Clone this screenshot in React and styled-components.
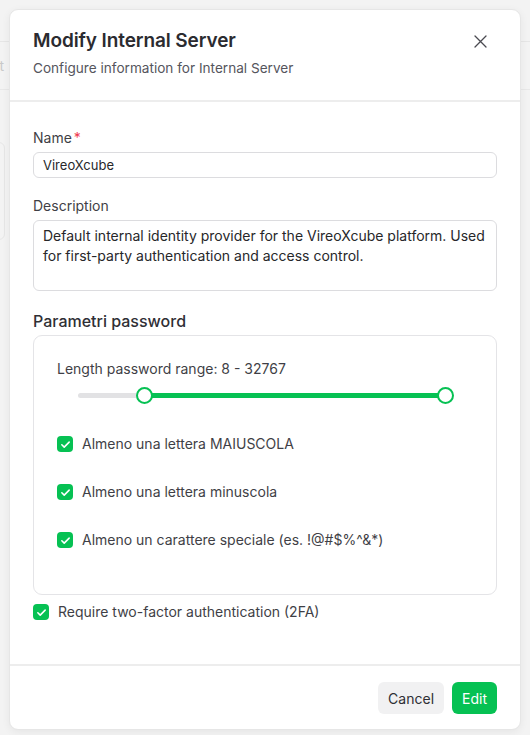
import React from "react";
import styled, { createGlobalStyle } from "styled-components";

const GlobalStyle = createGlobalStyle`
  * { box-sizing: border-box; }
  body {
    margin: 0;
    background: #f3f3f3;
    font-family: Inter, "Noto Sans", "Liberation Sans", sans-serif;
    color: #3f3f46;
    -webkit-font-smoothing: antialiased;
  }
`;

const Page = styled.div`
  position: relative;
  width: 530px;
  height: 735px;
  overflow: hidden;
  background: #f3f3f3;
`;

const GhostBar = styled.div`
  height: 42px;
  border-bottom: 1px solid #e6e6e6;
`;

const GhostRow = styled.div`
  height: 48px;
  border-bottom: 1px solid #e8e8e8;
  display: flex;
  align-items: center;
  font-size: 14px;
  color: #c9c9c9;
  & > span {
    margin-left: -4px;
  }
`;

const GhostCard = styled.div`
  margin: 52px 0 0 -10px;
  width: 15px;
  height: 98px;
  border: 1px solid #e6e6e6;
  border-radius: 6px;
`;

const Modal = styled.div`
  position: absolute;
  top: 9px;
  left: 9px;
  width: 512px;
  height: 721px;
  background: #fff;
  border-radius: 9px;
  border: 1px solid #e6e6e6;
  box-shadow: 0 2px 8px rgba(0, 0, 0, 0.06);
  display: flex;
  flex-direction: column;
`;

const Header = styled.div`
  position: relative;
  padding: 19px 23px 22px;
  border-bottom: 2px solid #ededed;
`;

const Title = styled.h2`
  margin: 0;
  font-size: 19px;
  line-height: 24px;
  font-weight: 600;
  color: #2b2b30;
  letter-spacing: -0.1px;
`;

const Subtitle = styled.p`
  margin: 5px 0 0;
  font-size: 13.6px;
  line-height: 20px;
  color: #55555d;
`;

const CloseButton = styled.button`
  position: absolute;
  top: 24px;
  right: 33px;
  width: 14px;
  height: 14px;
  padding: 0;
  border: 0;
  background: none;
  display: flex;
  align-items: center;
  justify-content: center;
  color: #4a4a50;
`;

const Body = styled.div`
  flex: 1;
  padding: 26px 23px 0;
  border-bottom: 2px solid #ededed;
`;

const Label = styled.div`
  font-size: 14px;
  line-height: 20px;
  color: #3f3f46;
  margin-top: ${(p) => p.$top || 0}px;
  margin-bottom: 4px;
  & > em {
    font-style: normal;
    color: #ef3b4f;
    margin-left: 2px;
  }
`;

const Input = styled.div`
  height: 26px;
  border: 1px solid #dcdcdf;
  border-radius: 6px;
  padding: 0 9px;
  display: flex;
  align-items: center;
  font-size: 13px;
  color: #27272a;
`;

const TextArea = styled.div`
  height: 71px;
  border: 1px solid #dcdcdf;
  border-radius: 6px;
  padding: 5px 9px;
  font-size: 14px;
  line-height: 20px;
  color: #27272a;
`;

const SectionTitle = styled.div`
  margin-top: 19px;
  font-size: 16px;
  line-height: 22px;
  font-weight: 500;
  color: #2f2f35;
`;

const PasswordBox = styled.div`
  margin-top: 3px;
  height: 260px;
  border: 1px solid #e4e4e7;
  border-radius: 9px;
  padding: 23px 23px 0;
`;

const RangeLabel = styled.div`
  font-size: 14px;
  line-height: 20px;
  color: #3f3f46;
`;

const SliderWrap = styled.div`
  position: relative;
  margin: 6px 27px 0 21px;
  height: 20px;
  display: flex;
  align-items: center;
`;

const Rail = styled.div`
  width: 100%;
  height: 5px;
  border-radius: 3px;
  background: #e2e2e4;
`;

const RangeFill = styled.div`
  position: absolute;
  top: 7.5px;
  height: 5px;
  border-radius: 3px;
  background: #06c153;
`;

const Thumb = styled.div`
  position: absolute;
  top: 1.5px;
  width: 17px;
  height: 17px;
  margin-left: -8.5px;
  border-radius: 50%;
  border: 2px solid #06c153;
  background: #fff;
`;

const CheckList = styled.div`
  margin-top: 29px;
  display: flex;
  flex-direction: column;
  gap: 28px;
`;

const CheckRow = styled.label`
  display: flex;
  align-items: center;
  gap: 9px;
  font-size: 14px;
  line-height: 20px;
  color: #3f3f46;
  margin-top: ${(p) => p.$top || 0}px;
`;

const Box = styled.span`
  width: 16px;
  height: 16px;
  flex: none;
  border-radius: 4px;
  background: #06c153;
  display: flex;
  align-items: center;
  justify-content: center;
`;

const Footer = styled.div`
  display: flex;
  justify-content: flex-end;
  gap: 8px;
  padding: 16px 23px 15px;
`;

const Button = styled.button`
  height: 32px;
  padding: 0 10px;
  border: 0;
  border-radius: 6px;
  font-family: inherit;
  font-size: 14px;
  background: ${(p) => (p.$primary ? "#06c153" : "#f1f1f2")};
  color: ${(p) => (p.$primary ? "#fff" : "#2f2f35")};
`;

const Check = ({ children, top }) => (
  <CheckRow $top={top}>
    <Box>
      <svg width="11" height="11" viewBox="0 0 12 12" fill="none">
        <path
          d="M2 6.3l2.6 2.6L10 3.4"
          stroke="#fff"
          strokeWidth="1.7"
          strokeLinecap="round"
          strokeLinejoin="round"
        />
      </svg>
    </Box>
    {children}
  </CheckRow>
);

export default function App() {
  const min = 18.2;
  const max = 99.8;
  return (
    <Page>
      <GlobalStyle />
      <GhostBar />
      <GhostRow>
        <span>it</span>
      </GhostRow>
      <GhostCard />
      <Modal>
        <Header>
          <Title>Modify Internal Server</Title>
          <Subtitle>Configure information for Internal Server</Subtitle>
          <CloseButton aria-label="Close">
            <svg width="13" height="13" viewBox="0 0 13 13" fill="none">
              <path
                d="M1 1l11 11M12 1L1 12"
                stroke="currentColor"
                strokeWidth="1.3"
                strokeLinecap="round"
              />
            </svg>
          </CloseButton>
        </Header>
        <Body>
          <Label>
            Name<em>*</em>
          </Label>
          <Input>VireoXcube</Input>
          <Label $top={18}>Description</Label>
          <TextArea>
            Default internal identity provider for the VireoXcube platform. Used
            for first-party authentication and access control.
          </TextArea>
          <SectionTitle>Parametri password</SectionTitle>
          <PasswordBox>
            <RangeLabel>Length password range: 8 - 32767</RangeLabel>
            <SliderWrap>
              <Rail />
              <RangeFill style={{ left: `${min}%`, right: `${100 - max}%` }} />
              <Thumb style={{ left: `${min}%` }} />
              <Thumb style={{ left: `${max}%` }} />
            </SliderWrap>
            <CheckList>
              <Check>Almeno una lettera MAIUSCOLA</Check>
              <Check>Almeno una lettera minuscola</Check>
              <Check>Almeno un carattere speciale (es. !@#$%^&amp;*)</Check>
            </CheckList>
          </PasswordBox>
          <Check top={7}>Require two-factor authentication (2FA)</Check>
        </Body>
        <Footer>
          <Button>Cancel</Button>
          <Button $primary>Edit</Button>
        </Footer>
      </Modal>
    </Page>
  );
}
